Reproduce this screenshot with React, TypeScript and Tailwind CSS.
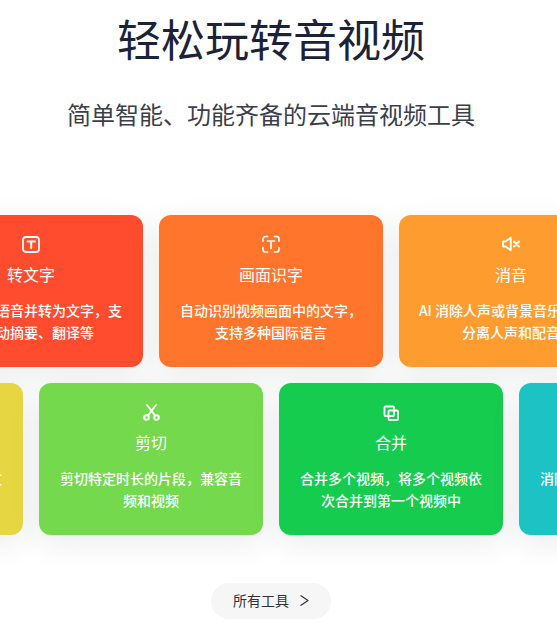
import React from "react";

type Tool = {
  title: string;
  lines: string[];
  bg: string;
  icon?: React.ReactNode;
};

const IconText = () => (
  <svg width="20" height="20" viewBox="0 0 20 20" fill="none" stroke="currentColor" strokeWidth="1.8" strokeLinecap="round" strokeLinejoin="round">
    <rect x="2" y="3" width="16" height="15" rx="3" />
    <path d="M6.500 7.500h7.500M10.200 7.500v6.500" strokeWidth="2" />
  </svg>
);

const IconScan = () => (
  <svg width="20" height="20" viewBox="0 0 20 20" fill="none" stroke="currentColor" strokeWidth="1.7" strokeLinecap="round" strokeLinejoin="round">
    <path d="M2 7V5A2.500 2.500 0 0 1 4.500 2.500h2M13.500 2.500h2A2.500 2.500 0 0 1 18 5v2M18 13.500v2a2.500 2.500 0 0 1-2.500 2.500h-2M6.500 18h-2A2.500 2.500 0 0 1 2 15.500v-2" />
    <path d="M6.500 7h7M10 7v7.500" />
  </svg>
);

const IconMute = () => (
  <svg width="20" height="20" viewBox="0 0 20 20" fill="none" stroke="currentColor" strokeWidth="1.9" strokeLinecap="round" strokeLinejoin="round">
    <path d="M2 7.500h2.500L9.800 3.800v12.400L4.500 12.500H2z" />
    <path d="M13 7.500l5 5M18 7.500l-5 5" strokeWidth="2.100" />
  </svg>
);

const IconScissors = () => (
  <svg width="20" height="20" viewBox="0 0 20 20" fill="none" stroke="currentColor" strokeWidth="2" strokeLinecap="round" strokeLinejoin="round">
    <circle cx="5.500" cy="15.500" r="2.300" />
    <circle cx="15.500" cy="15.500" r="2.300" />
    <path d="M7 13.500L15 3M14 13.500L6 3" />
  </svg>
);

const IconMerge = () => (
  <svg width="20" height="20" viewBox="0 0 20 20" fill="none" stroke="currentColor" strokeWidth="1.8" strokeLinejoin="round">
    <rect x="3.500" y="4.500" width="9.500" height="9.500" rx="1" />
    <rect x="7.500" y="8.500" width="9.500" height="9.500" rx="1" />
  </svg>
);

const rowOne: Tool[] = [
  { title: "转文字", lines: ["识别视频语音并转为文字，支", "持自动摘要、翻译等"], bg: "bg-[#ff4b2e]", icon: <IconText /> },
  { title: "画面识字", lines: ["自动识别视频画面中的文字，", "支持多种国际语言"], bg: "bg-[#ff752b]", icon: <IconScan /> },
  { title: "消音", lines: ["AI 消除人声或背景音乐，可以", "分离人声和配音"], bg: "bg-[#ff9c30]", icon: <IconMute /> },
];

const rowTwo: Tool[] = [
  { title: "压缩", lines: ["在保持画质的同时压缩视频文", "件大小"], bg: "bg-[#e6d742]" },
  { title: "剪切", lines: ["剪切特定时长的片段，兼容音", "频和视频"], bg: "bg-[#74d94c]", icon: <IconScissors /> },
  { title: "合并", lines: ["合并多个视频，将多个视频依", "次合并到第一个视频中"], bg: "bg-[#16cc4e]", icon: <IconMerge /> },
  { title: "去水印", lines: ["消除视频画面中的水印内容，", "还原干净画面"], bg: "bg-[#1dc2c4]" },
];

const ToolCard = ({ tool }: { tool: Tool }) => (
  <div className={`w-[224px] h-[152px] shrink-0 rounded-xl ${tool.bg} px-5 pt-[19px] text-center text-white shadow-[0_8px_30px_rgba(30,40,60,0.09)]`}>
    <div className="h-5 flex justify-center">{tool.icon}</div>
    <p className="mt-2 text-base leading-6">{tool.title}</p>
    <div className="mt-[13px] text-sm font-medium leading-[22px] whitespace-nowrap flex flex-col items-center">
      {tool.lines.map((line) => (
        <span key={line}>{line}</span>
      ))}
    </div>
  </div>
);

const App = () => {
  return (
    <div className="w-[557px] h-[627px] overflow-hidden bg-white font-['Noto_Sans_CJK_SC','Noto_Sans',sans-serif]">
      <div className="w-[542px]">
        <h1 className="pt-[7px] text-center text-[44px] leading-[62px] font-normal text-[#1c2338]">轻松玩转音视频</h1>
        <p className="mt-[29px] text-center text-2xl leading-8 text-[#3a3f4b]">简单智能、功能齐备的云端音视频工具</p>
      </div>
      <div className="mt-[85px] flex flex-col gap-4">
        <div className="flex gap-4 ml-[-81px]">
          {rowOne.map((tool) => (
            <ToolCard key={tool.title} tool={tool} />
          ))}
        </div>
        <div className="flex gap-4 ml-[-201px]">
          {rowTwo.map((tool) => (
            <ToolCard key={tool.title} tool={tool} />
          ))}
        </div>
      </div>
      <div className="w-[542px] mt-12 flex justify-center">
        <button type="button" className="w-[120px] h-9 pb-[2px] rounded-full bg-[#f6f6f7] flex items-center justify-center gap-[11px] text-sm text-[#333]">
          所有工具
          <svg width="9" height="11" viewBox="0 0 9 11" fill="none" stroke="currentColor" strokeWidth="1.2" strokeLinecap="round" strokeLinejoin="round">
            <path d="M1 .700L8 5.500 1 10.300" />
          </svg>
        </button>
      </div>
    </div>
  );
};

export default App;
